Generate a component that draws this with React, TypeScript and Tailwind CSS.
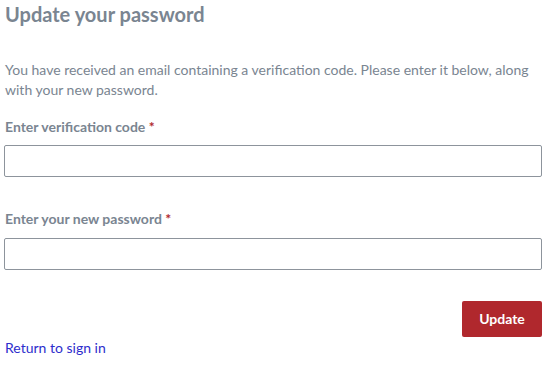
export default function App() {
  const font = { fontFamily: 'Lato, "Open Sans", sans-serif' };
  return (
    <div className="bg-white w-[549px] h-[365px] pl-[4px] pr-[7px]" style={font}>
      <h1 className="pt-[2px] pl-[1px] text-[20px] leading-[24px] font-bold text-[#7a8591]">Update your password</h1>
      <p className="mt-[34px] pl-[1px] text-[14px] leading-[20px] text-[#7a8591]">
        You have received an email containing a verification code. Please enter it below, along with your new password.
      </p>
      <label className="block mt-[17px] pl-[1px] text-[14px] leading-[20px] font-bold text-[#7a8591]">
        Enter verification code <span className="text-[#b0282d]">*</span>
      </label>
      <input type="text" className="block mt-[8px] w-full h-[32px] border border-[#8d949c] rounded-[2px] bg-white outline-none" />
      <label className="block mt-[32px] pl-[1px] text-[14px] leading-[20px] font-bold text-[#7a8591]">
        Enter your new password <span className="text-[#b0282d]">*</span>
      </label>
      <input type="password" className="block mt-[9px] w-full h-[32px] border border-[#8d949c] rounded-[2px] bg-white outline-none" />
      <div className="flex justify-end mt-[31px]">
        <button className="w-[80px] h-[36px] pb-[2px] bg-[#b0282d] rounded-[2px] text-white font-bold text-[14px]">Update</button>
      </div>
      <a href="#" className="block mt-[1px] pl-[1px] text-[14px] leading-[20px] text-[#2d2dcc]">Return to sign in</a>
    </div>
  );
}
